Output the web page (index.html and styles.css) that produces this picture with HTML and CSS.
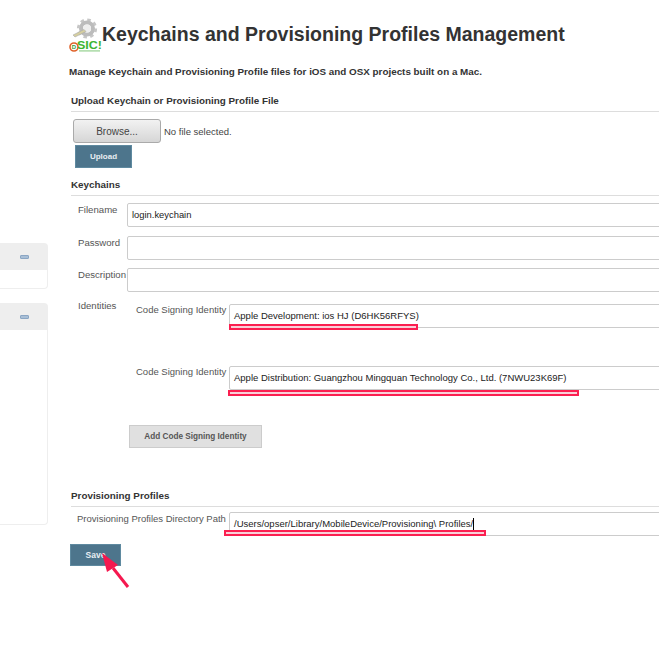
FILE: index.html
```html
<!DOCTYPE html>
<html lang="en">
<head>
    <meta charset="UTF-8">
    <meta name="viewport" content="width=device-width, initial-scale=1.0">
    <title>Keychains and Provisioning Profiles Management</title>
    <link rel="stylesheet" href="styles.css">
</head>
<body>
    <div class="side">
        <div class="panel panel-small">
            <div class="panel-head"><span class="minus"></span></div>
        </div>
        <div class="panel panel-big">
            <div class="panel-head"><span class="minus"></span></div>
        </div>
    </div>
    <div class="main">
        <div class="title-row">
            <svg class="logo" width="33" height="36" viewBox="0 0 33 36">
                <g transform="translate(18 12.5)">
                    <circle r="8.8" fill="none" stroke="#c6c6c6" stroke-width="2.6" stroke-dasharray="3.5 3.41"/>
                    <circle r="6" fill="none" stroke="#bcbcbc" stroke-width="4"/>
                    <circle r="4" fill="#eeeeee"/>
                </g>
                <path d="M4 19 L15 13.5 L17 15.5 L6 21 Z" fill="#d6cfa0" stroke="#aaaaaa" stroke-width="0.6"/>
                <rect x="6" y="24" width="27" height="11" fill="#fff" opacity="0.85"/>
                <circle cx="5" cy="31" r="4" fill="#fff" stroke="#e0622a" stroke-width="1.6"/>
                <text x="5" y="33.2" class="logo-o">D</text>
                <text x="8" y="33" class="logo-sic" textLength="25" lengthAdjust="spacingAndGlyphs">SIC!</text>
                <rect x="10" y="34.2" width="21" height="1.4" fill="#a5d8a0"/>
            </svg>
            <h1>Keychains and Provisioning Profiles Management</h1>
        </div>
        <p class="desc">Manage Keychain and Provisioning Profile files for iOS and OSX projects built on a Mac.</p>

        <h2 class="section first">Upload Keychain or Provisioning Profile File</h2>
        <div class="upload">
            <div class="file-row">
                <button class="browse">Browse...</button>
                <span>No file selected.</span>
            </div>
            <button class="btn btn-upload">Upload</button>
        </div>

        <h2 class="section keychains">Keychains</h2>
        <div class="row row-filename">
            <label>Filename</label>
            <div class="input">login.keychain</div>
        </div>
        <div class="row row-password">
            <label>Password</label>
            <div class="input"></div>
        </div>
        <div class="row row-description">
            <label>Description</label>
            <div class="input"></div>
        </div>
        <div class="identities">
            <label>Identities</label>
            <div class="identity-list">
                <div class="identity">
                    <label>Code Signing Identity</label>
                    <div class="input small">Apple Development: ios HJ (D6HK56RFYS)<span class="mark mark-dev"></span></div>
                </div>
                <div class="identity second">
                    <label>Code Signing Identity</label>
                    <div class="input small">Apple Distribution: Guangzhou Mingquan Technology Co., Ltd. (7NWU23K69F)<span class="mark mark-dist"></span></div>
                </div>
                <button class="add">Add Code Signing Identity</button>
            </div>
        </div>

        <h2 class="section profiles">Provisioning Profiles</h2>
        <div class="row-path">
            <label>Provisioning Profiles Directory Path</label>
            <div class="input small">/Users/opser/Library/MobileDevice/Provisioning\ Profiles/<span class="caret"></span><span class="mark mark-path"></span></div>
        </div>
        <button class="btn btn-save">Save</button>
    </div>
    <svg class="arrow" width="40" height="46" viewBox="0 0 40 46">
        <path d="M21 24 L36 43" stroke="#f5184f" stroke-width="3" fill="none"/>
        <path d="M10 9 L26 21 L15 28 Z" fill="#f5184f"/>
    </svg>
</body>
</html>
```

FILE: styles.css
```css
body {
    margin: 0;
    padding: 0;
    display: flex;
    height: 662px;
    overflow: hidden;
    position: relative;
    background-color: #fff;
    font-family: "Liberation Sans", Arial, sans-serif;
    color: #333;
}

.side {
    flex: 0 0 48px;
    padding-top: 243px;
    box-sizing: border-box;
}

.panel {
    border: 1px solid #eee;
    border-left: none;
    border-radius: 0 4px 4px 0;
    box-sizing: border-box;
}

.panel-small {
    height: 46px;
    margin-bottom: 14px;
}

.panel-big {
    height: 222px;
}

.panel-head {
    height: 26px;
    background-color: #eee;
    display: flex;
    justify-content: flex-end;
    align-items: center;
    padding-right: 18px;
}

.minus {
    width: 9px;
    height: 4px;
    background-color: #a9bfd6;
    border: 1px solid #8ba6c4;
    border-radius: 1px;
    box-sizing: border-box;
}

.main {
    flex: 1;
    margin-left: 21px;
    min-width: 0;
    overflow: hidden;
}

.title-row {
    display: flex;
    align-items: center;
    height: 36px;
    margin-top: 16px;
}

.logo {
    flex: none;
}

.logo-o {
    font-size: 6px;
    font-weight: bold;
    fill: #3a9a3a;
    text-anchor: middle;
}

.logo-sic {
    font-size: 10.5px;
    font-weight: bold;
    fill: #3cb531;
}

h1 {
    margin: 0;
    font-size: 19.5px;
    font-weight: bold;
    white-space: nowrap;
    color: #333;
}

.desc {
    margin: 13px 0 0;
    font-size: 9.85px;
    line-height: 14px;
    font-weight: bold;
}

.section {
    margin: 0 0 0 2px;
    font-size: 9.85px;
    line-height: 14px;
    font-weight: bold;
    padding-bottom: 3px;
    border-bottom: 1px solid #ddd;
}

.section.first {
    margin-top: 15px;
}

.upload {
    margin-left: 4px;
    padding-top: 7px;
}

.file-row {
    display: flex;
    align-items: center;
    font-size: 9.5px;
    color: #444;
}

.file-row span {
    margin-left: 3px;
}

.browse {
    width: 88px;
    height: 24px;
    padding: 0;
    font-family: inherit;
    font-size: 10px;
    color: #444;
    background: linear-gradient(#f2f2f2, #d6d6d6);
    border: 1px solid #aaa;
    border-radius: 3px;
}

.btn {
    display: block;
    padding: 0;
    font-family: inherit;
    font-size: 8px;
    font-weight: bold;
    color: #e8eef2;
    background-color: #4d758c;
    border: 1px solid #5f8aa0;
}

.btn-upload {
    width: 57px;
    height: 23px;
    margin: 2px 0 0 2px;
}

.section.keychains {
    margin-top: 10px;
}

.row {
    display: flex;
    margin-left: 9px;
}

.row label {
    flex: 0 0 49px;
    font-size: 9.6px;
    color: #555;
    padding-top: 1px;
    white-space: nowrap;
}

.row-filename {
    margin-top: 7px;
}

.row-password {
    margin-top: 9px;
}

.row-description {
    margin-top: 8px;
}

.input {
    position: relative;
    flex: 1;
    min-width: 0;
    margin-right: -10px;
    height: 24px;
    box-sizing: border-box;
    border: 1px solid #ccc;
    border-radius: 2px;
    padding: 0 4px;
    font-size: 9.4px;
    line-height: 22px;
    color: #222;
    white-space: nowrap;
}

.input.small {
    font-size: 9.5px;
}

.identities {
    display: flex;
    margin: 8px 0 0 9px;
}

.identities > label {
    flex: 0 0 58px;
    font-size: 9.6px;
    color: #555;
}

.identity {
    display: flex;
    height: 24px;
}

.identity label {
    flex: 0 0 93px;
    font-size: 9.5px;
    color: #555;
    white-space: nowrap;
}

.identity.second {
    margin-top: 38px;
}

.identity-list {
    flex: 1;
    min-width: 0;
    padding-top: 4px;
}

.add {
    display: block;
    width: 133px;
    height: 23px;
    margin: 35px 0 0 -7px;
    padding: 0;
    font-family: inherit;
    font-size: 8.2px;
    font-weight: bold;
    color: #555;
    background-color: #e0e0e0;
    border: 1px solid #ccc;
}

.section.profiles {
    margin-top: 41px;
}

.row-path {
    display: flex;
    margin: 5px 0 0 8px;
    height: 24px;
}

.row-path label {
    flex: 0 0 152px;
    font-size: 9.5px;
    color: #555;
    padding-top: 1px;
    white-space: nowrap;
}

.caret {
    display: inline-block;
    width: 1px;
    height: 13px;
    background-color: #000;
    vertical-align: middle;
}

.btn-save {
    width: 51px;
    height: 22px;
    margin: 8px 0 0 1px;
    font-size: 8.5px;
}

/* red annotations drawn on top of the screenshot */
.mark {
    position: absolute;
    height: 6px;
    box-sizing: border-box;
    background-color: #f9d0d8;
    border: 2px solid #fb1f50;
}

.mark-dev {
    left: -1px;
    top: 19px;
    width: 189px;
}

.mark-dist {
    left: -2px;
    top: 23px;
    width: 351px;
}

.mark-path {
    left: -6px;
    top: 17px;
    width: 262px;
}

.arrow {
    position: absolute;
    left: 92px;
    top: 544px;
}
```
